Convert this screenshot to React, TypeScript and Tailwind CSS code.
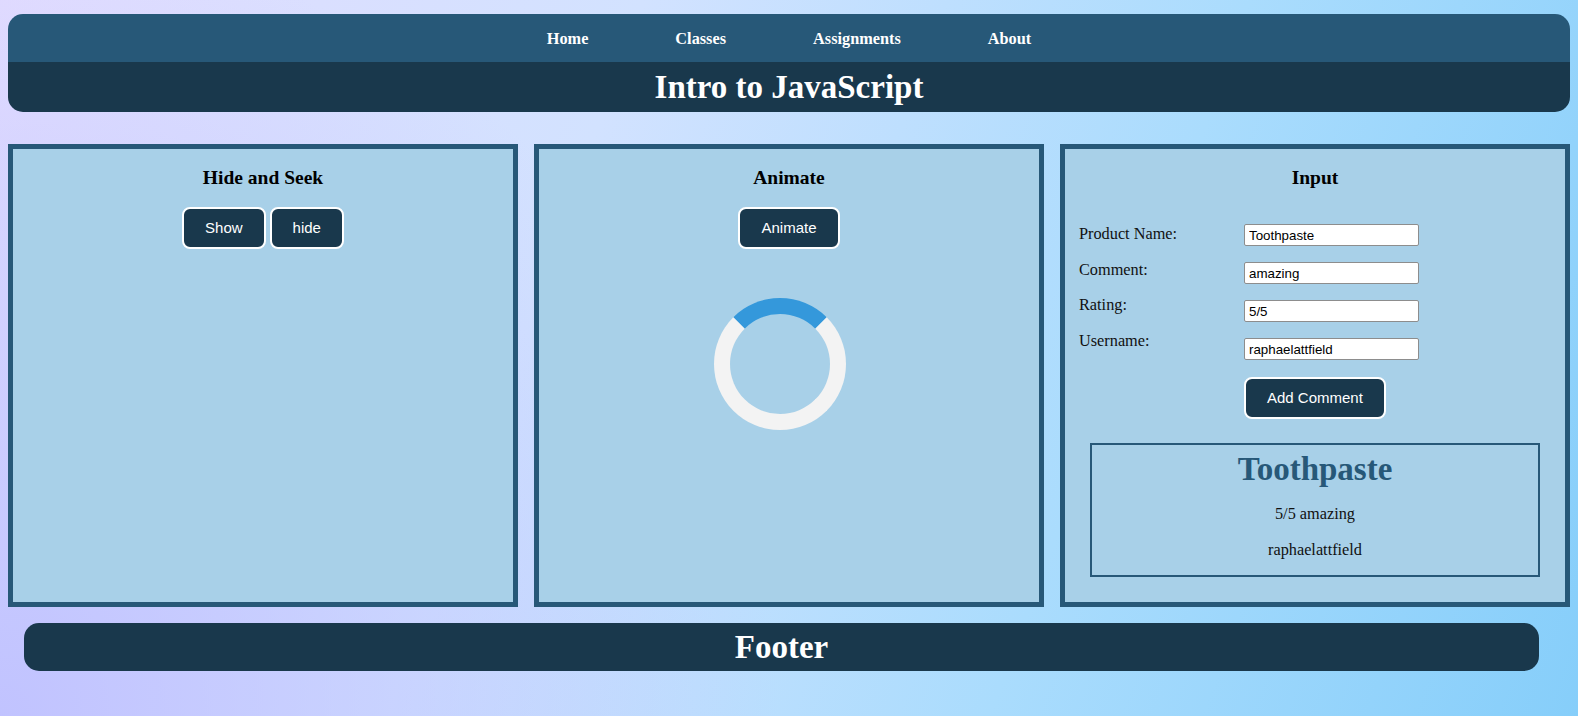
import { useState } from "react";

const serif = "font-['Liberation_Serif','Times_New_Roman',serif]";
const sans = "font-['Liberation_Sans',Arial,sans-serif]";

const navLinks = ["Home", "Classes", "Assignments", "About"];

function DarkButton({ label, onClick }: { label: string; onClick?: () => void }) {
  return (
    <button
      type="button"
      onClick={onClick}
      className={`${sans} rounded-[8px] border-2 border-white bg-[#19384c] px-[21px] py-[10px] text-[15px] leading-[18px] text-white`}
    >
      {label}
    </button>
  );
}

function Panel({ title, children }: { title: string; children: React.ReactNode }) {
  return (
    <section className="h-[463px] w-[510px] border-[5px] border-[#275878] bg-[#a8d0e8]">
      <h3 className={`${serif} mt-[18px] mb-[18px] text-center text-[19.5px] leading-[22px] font-bold text-black`}>
        {title}
      </h3>
      {children}
    </section>
  );
}

export default function App() {
  const [visible, setVisible] = useState(true);
  const [form, setForm] = useState({
    product: "Toothpaste",
    comment: "amazing",
    rating: "5/5",
    username: "raphaelattfield",
  });
  const [posted, setPosted] = useState(form);

  const fields: { key: keyof typeof form; label: string }[] = [
    { key: "product", label: "Product Name:" },
    { key: "comment", label: "Comment:" },
    { key: "rating", label: "Rating:" },
    { key: "username", label: "Username:" },
  ];

  return (
    <div className="h-[716px] w-[1578px] overflow-hidden bg-[radial-gradient(circle_at_0%_100%,rgba(188,190,255,0.85)_0%,rgba(188,190,255,0)_45%),linear-gradient(110deg,#e2dcff_0%,#d2e2ff_35%,#aadcfd_68%,#86cefa_100%)] px-[8px] pt-[14px]">
      <header className="w-[1562px] overflow-hidden rounded-[15px]">
        <nav className="flex h-[48px] items-center justify-center gap-[87px] bg-[#275878] pt-[2px]">
          {navLinks.map((link) => (
            <a key={link} href="#" className={`${serif} text-[16.3px] font-bold text-white`}>
              {link}
            </a>
          ))}
        </nav>
        <div className="flex h-[50px] items-center justify-center bg-[#19384c]">
          <h1 className={`${serif} text-[33px] leading-[38px] font-bold text-white`}>Intro to JavaScript</h1>
        </div>
      </header>

      <main className="mt-[32px] flex gap-[16px]">
        <Panel title="Hide and Seek">
          <div className="flex justify-center gap-[4px]">
            <DarkButton label="Show" onClick={() => setVisible(true)} />
            <DarkButton label="hide" onClick={() => setVisible(false)} />
          </div>
          {!visible && <div className="hidden" />}
        </Panel>

        <Panel title="Animate">
          <div className="flex justify-center">
            <DarkButton label="Animate" />
          </div>
          <div className="mt-[49px] ml-[35%] h-[132px] w-[132px] rounded-full border-[16px] border-[#f3f3f3] border-t-[#3498db]" />
        </Panel>

        <Panel title="Input">
          <div className="mt-[35px] flex pl-[14px]">
            <div className={`${serif} flex w-[165px] flex-col gap-[17.5px] pt-[1px] text-[16.3px] leading-[18px] text-[#111]`}>
              {fields.map((f) => (
                <label key={f.key}>{f.label}</label>
              ))}
            </div>
            <div className="flex flex-col items-start">
              <div className="flex flex-col gap-[16px]">
                {fields.map((f) => (
                  <input
                    key={f.key}
                    type="text"
                    value={form[f.key]}
                    onChange={(e) => setForm({ ...form, [f.key]: e.target.value })}
                    className={`${sans} h-[22px] w-[175px] rounded-[2px] border border-[#8d8d8d] bg-white px-[4px] text-[13.33px] text-black outline-none`}
                  />
                ))}
              </div>
              <div className="mt-[17px]">
                <DarkButton label="Add Comment" onClick={() => setPosted(form)} />
              </div>
            </div>
          </div>

          <div className="mx-auto mt-[24px] w-[450px] border-2 border-[#275878] pt-[5px] pb-[16px] text-center">
            <h1 className={`${serif} text-[33px] leading-[38px] font-bold text-[#275878]`}>{posted.product}</h1>
            <p className={`${serif} mt-[17px] text-[16.3px] leading-[18px] text-[#111]`}>
              {posted.rating} {posted.comment}
            </p>
            <p className={`${serif} mt-[18px] text-[16.3px] leading-[18px] text-[#111]`}>{posted.username}</p>
          </div>
        </Panel>
      </main>

      <footer className="mt-[16px] ml-[16px] flex h-[48px] w-[1515px] items-center justify-center rounded-[15px] bg-[#19384c]">
        <h1 className={`${serif} text-[33px] leading-[38px] font-bold text-white`}>Footer</h1>
      </footer>
    </div>
  );
}
